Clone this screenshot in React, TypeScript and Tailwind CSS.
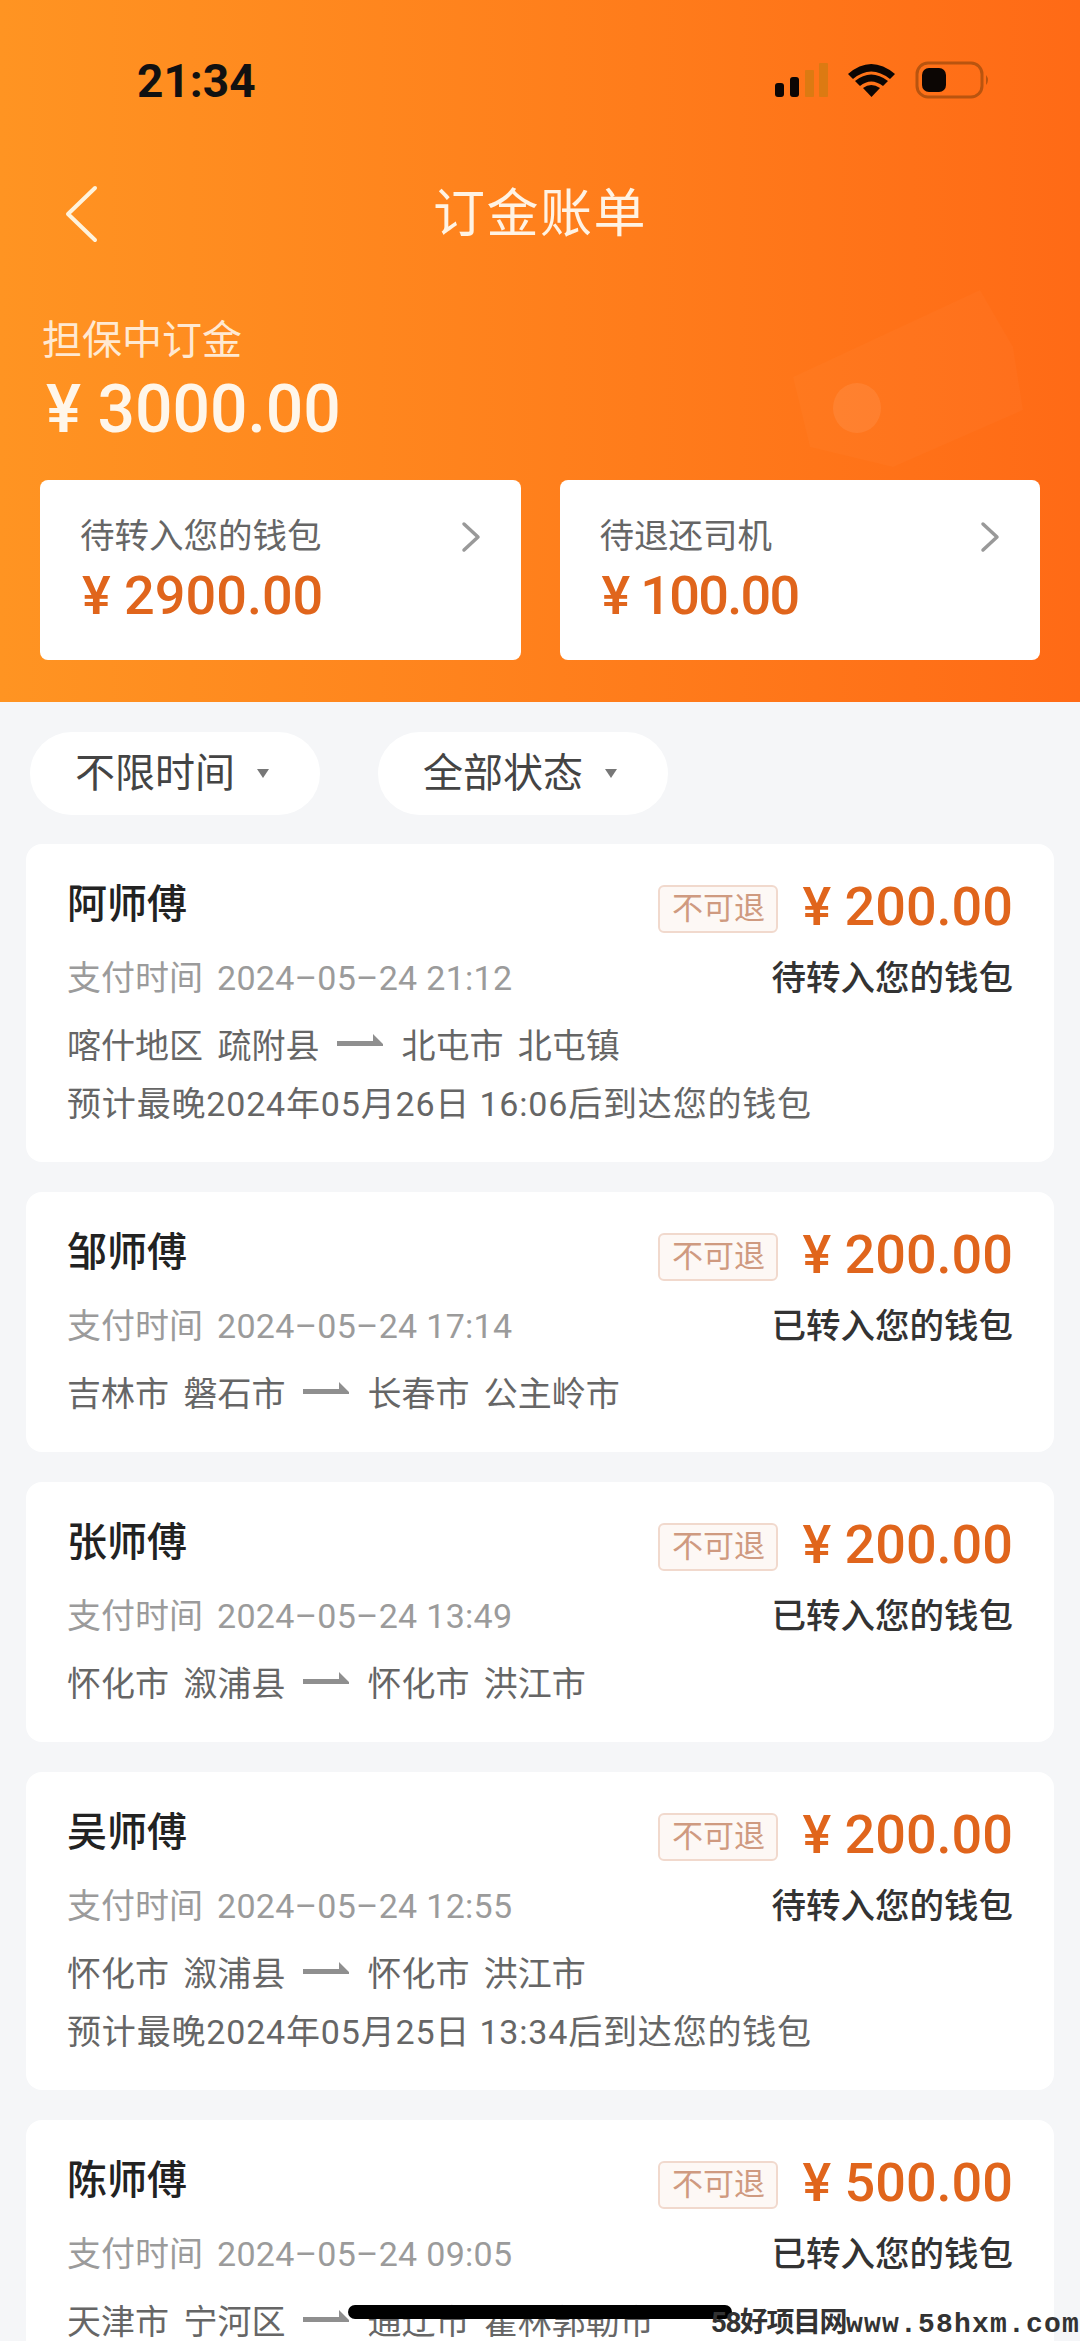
interface orderData {
  name: string;
  amount: string;
  time: string;
  status: string;
  from: string;
  to: string;
  note?: string;
}

const orders: orderData[] = [
  { name: "阿师傅", amount: "200.00", time: "2024–05–24 21:12", status: "待转入您的钱包", from: "喀什地区 疏附县", to: "北屯市 北屯镇", note: "预计最晚2024年05月26日 16:06后到达您的钱包" },
  { name: "邹师傅", amount: "200.00", time: "2024–05–24 17:14", status: "已转入您的钱包", from: "吉林市 磐石市", to: "长春市 公主岭市" },
  { name: "张师傅", amount: "200.00", time: "2024–05–24 13:49", status: "已转入您的钱包", from: "怀化市 溆浦县", to: "怀化市 洪江市" },
  { name: "吴师傅", amount: "200.00", time: "2024–05–24 12:55", status: "待转入您的钱包", from: "怀化市 溆浦县", to: "怀化市 洪江市", note: "预计最晚2024年05月25日 13:34后到达您的钱包" },
  { name: "陈师傅", amount: "500.00", time: "2024–05–24 09:05", status: "已转入您的钱包", from: "天津市 宁河区", to: "通辽市 霍林郭勒市" },
];

const StatusIcons = () => (
  <svg width="220" height="40" viewBox="0 0 220 40" className="mr-[45px]">
    <rect x="0" y="22" width="9" height="14" rx="3" fill="#0c0604" />
    <rect x="15" y="16" width="9" height="20" rx="3" fill="#0c0604" />
    <rect x="30" y="9" width="9" height="27" rx="1" fill="#dc7a12" />
    <rect x="44" y="2" width="9" height="34" rx="1" fill="#dc7a12" />
    <path d="M73 13 Q96 -7 120 13 L115 18 Q96 3 78 18 Z" fill="#0c0604" />
    <path d="M80 20 Q96 7 113 20 L108 25 Q96 16 85 25 Z" fill="#0c0604" />
    <path d="M88 27 Q96 21 105 27 L96.5 36 Z" fill="#0c0604" />
    <rect x="142" y="2" width="65" height="34" rx="11" fill="none" stroke="#b9540f" strokeWidth="3" />
    <rect x="147" y="7" width="24" height="24" rx="7" fill="#0c0604" />
    <path d="M211 14 Q215 19 211 24 Z" fill="#b9540f" />
  </svg>
);

// faint wallet behind the header amounts
const Wallet = () => (
  <svg width="240" height="185" viewBox="0 0 240 185" className="absolute left-[790px] top-[285px]">
    <path d="M3 92 L190 5 L223 62 L233 125 L103 182 L20 162 Z" fill="#ffffff" opacity="0.025" />
    <ellipse cx="67" cy="123" rx="24" ry="25" fill="#ffffff" opacity="0.08" />
  </svg>
);

const BackIcon = () => (
  <svg width="36" height="60" viewBox="0 0 36 60" className="absolute left-[24px]">
    <path d="M31 4 L4 30 L31 56" fill="none" stroke="#fff3dc" strokeWidth="4" strokeLinecap="round" strokeLinejoin="round" />
  </svg>
);

const MoreIcon = () => (
  <svg width="20" height="32" viewBox="0 0 20 32">
    <path d="M3 3 L17 16 L3 29" fill="none" stroke="#999999" strokeWidth="3.5" strokeLinecap="round" strokeLinejoin="round" />
  </svg>
);

const RouteArrow = () => (
  <svg width="46" height="14" viewBox="0 0 46 14" className="mx-[18px] mb-[12px]">
    <path d="M0 8 H36 V1 L46 11 V13 H0 Z" fill="#8f8f8f" />
  </svg>
);

const SummaryCard = ({ label, amount, amountClass }: { label: string; amount: string; amountClass: string }) => (
  <div className="flex-1 h-[180px] bg-white rounded-[8px] pt-[36px] pl-[40px] pr-[40px]">
    <div className="flex items-center justify-between h-[42px] text-[34.5px] text-[#666666]">
      <span>{label}</span>
      <MoreIcon />
    </div>
    <p className={`mt-[8px] ml-[2px] h-[60px] leading-[60px] text-[54px] font-medium text-[#e0651c] ${amountClass}`}>¥ {amount}</p>
  </div>
);

const FilterPill = ({ label }: { label: string }) => (
  <div className="w-[290px] h-[83px] bg-white rounded-full flex items-center justify-center pr-[6px] text-[40px] text-[#444444]">
    <span>{label}</span>
    <span className="ml-[22px] w-0 h-0 border-x-[6px] border-x-transparent border-t-[9px] border-t-[#777777]" />
  </div>
);

const OrderCard = ({ name, amount, time, status, from, to, note }: orderData) => (
  <div className="bg-white rounded-[16px] pt-[28px] pb-[38px] px-[41px]">
    <div className="flex items-center justify-between h-[70px]">
      <p className="text-[40px] font-medium text-[#222222] mb-[4px]">{name}</p>
      <div className="flex items-center">
        <span className="w-[120px] h-[48px] mt-[4px] rounded-[6px] border-2 border-[#f1d9cd] bg-[#fdf8f5] flex items-center justify-center text-[31px] text-[#cf9a80]">不可退</span>
        <span className="ml-[24px] text-[54px] leading-[60px] font-medium text-[#e0651c]">¥ {amount}</span>
      </div>
    </div>
    <div className="flex items-center justify-between h-[40px] mt-[16px] text-[34px]">
      <p className="text-[#9b9b9b]">
        支付时间<span className="ml-[14px] tracking-[0.3px]">{time}</span>
      </p>
      <span className="mt-[2px] text-[34.5px] font-medium text-[#333333]">{status}</span>
    </div>
    <div className="flex items-center h-[40px] mt-[28px] text-[34px] text-[#666666] [word-spacing:6px]">
      <span>{from}</span>
      <RouteArrow />
      <span>{to}</span>
    </div>
    {note && <p className="h-[40px] leading-[40px] mt-[18px] text-[34px] tracking-[0.82px] text-[#666666]">{note}</p>}
  </div>
);

const Header = () => (
  <div className="relative h-[702px] bg-linear-to-r from-[#ff9422] to-[#ff6a16] px-[40px]">
    <Wallet />
    <div className="relative flex items-center justify-between h-[162px]">
      <p className="ml-[97px] text-[46px] font-bold text-[#111111]">21:34</p>
      <StatusIcons />
    </div>
    <div className="relative flex items-center justify-center h-[104px] text-[52px] text-[#fff3e4]">
      <BackIcon />
      <span className="mt-[2px] tracking-[1.5px]">订金账单</span>
    </div>
    <p className="relative mt-[47px] ml-[2px] h-[56px] leading-[56px] text-[40px] text-[#ffe9d2]">担保中订金</p>
    <p className="relative mt-[5px] ml-[6px] h-[72px] leading-[72px] text-[66px] font-medium text-[#fff6ea]">¥ 3000.00</p>
    <div className="relative mt-[34px] flex gap-[39px]">
      <SummaryCard label="待转入您的钱包" amount="2900.00" amountClass="" />
      <SummaryCard label="待退还司机" amount="100.00" amountClass="tracking-[-1.7px]" />
    </div>
  </div>
);

const App = () => {
  return (
    <div className="relative w-[1080px] h-[2341px] overflow-hidden bg-[#f5f6f8] [font-family:Roboto,'Noto_Sans_CJK_SC',sans-serif]">
      <Header />
      <div className="px-[26px]">
        <div className="flex gap-[58px] pt-[30px] pl-[4px]">
          <FilterPill label="不限时间" />
          <FilterPill label="全部状态" />
        </div>
        <div className="flex flex-col gap-[30px] mt-[29px]">
          {orders.map((order) => (
            <OrderCard key={order.name} {...order} />
          ))}
        </div>
      </div>
      <div className="absolute left-[348px] top-[2305px] w-[384px] h-[14px] rounded-full bg-black" />
      <p className="absolute right-0 bottom-0 leading-[32px] flex items-baseline text-[#333333] font-bold whitespace-nowrap">
        <span className="text-[28px] tracking-[-1.5px]">58好项目网</span>
        <span className="text-[28px] tracking-[1.2px] [font-family:'Liberation_Mono',monospace]">www.58hxm.com</span>
      </p>
    </div>
  );
};

export default App;
